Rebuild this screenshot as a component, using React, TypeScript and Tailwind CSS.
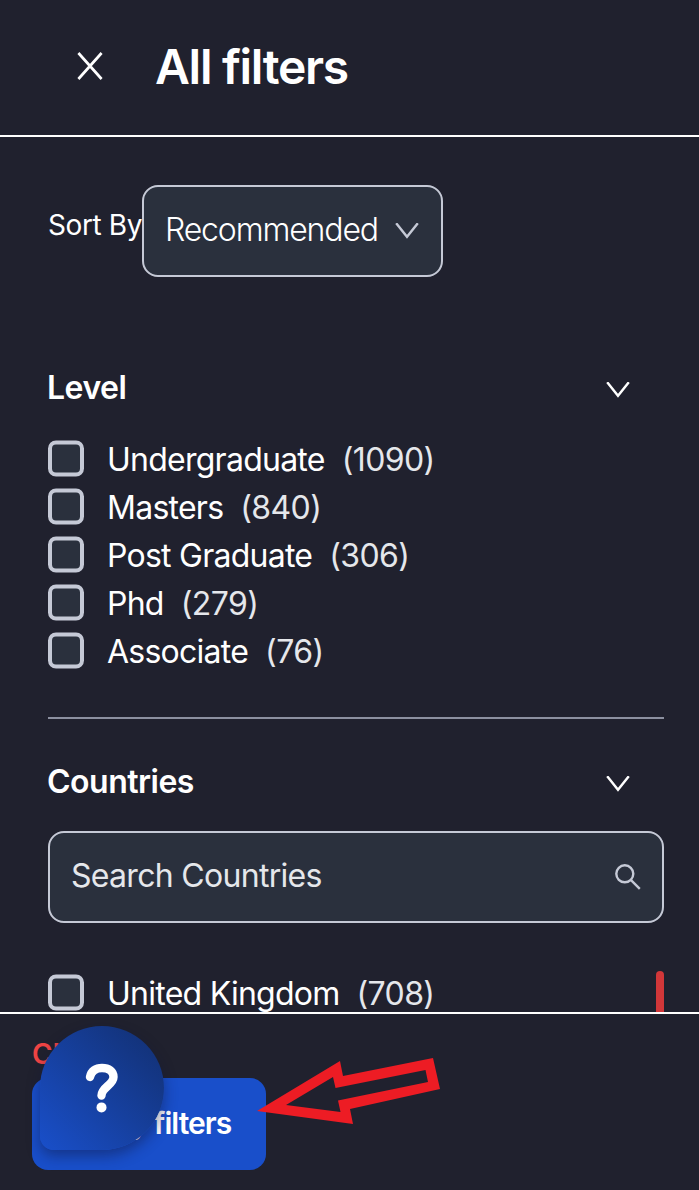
interface FilterOption {
  label: string;
  count: number;
}

const levels: FilterOption[] = [
  { label: 'Undergraduate', count: 1090 },
  { label: 'Masters', count: 840 },
  { label: 'Post Graduate', count: 306 },
  { label: 'Phd', count: 279 },
  { label: 'Associate', count: 76 },
];

const countries: FilterOption[] = [{ label: 'United Kingdom', count: 708 }];

function ChevronDown({ className }: { className?: string }) {
  return (
    <svg viewBox="0 0 24 16" fill="none" stroke="currentColor" strokeWidth="2.4" className={`h-4 w-6 ${className ?? ''}`}>
      <path d="M1.2 0.2 12 13.8 22.8 0.2" />
    </svg>
  );
}

function OptionRow({ label, count }: FilterOption) {
  return (
    <label className="flex h-12 items-start">
      <input
        type="checkbox"
        className="mt-[5px] h-9 w-9 shrink-0 -translate-y-[0.5px] appearance-none rounded-lg border-4 border-[#c5c9d6] bg-[#2a303d]"
      />
      <span className="ml-[23px] text-[32px] leading-[48px] tracking-[-0.75px] whitespace-nowrap">{label}</span>
      <span className="ml-[17px] text-[32px] leading-[48px] tracking-[-0.6px] whitespace-nowrap text-gray-200">({count})</span>
    </label>
  );
}

function SectionTitle({ title }: { title: string }) {
  return (
    <div className="flex h-12 items-center justify-between pr-[34px]">
      <h2 className="-ml-px text-[32px] leading-[48px] font-semibold tracking-[-0.5px]">{title}</h2>
      <ChevronDown className="mt-[3px]" />
    </div>
  );
}

export default function App() {
  return (
    <div className="flex h-[1190px] w-[699px] flex-col overflow-hidden bg-[#20212e] font-['Inter','Liberation_Sans',sans-serif] text-white">
      {/* Header */}
      <header className="flex h-[137px] shrink-0 items-center border-b-2 border-white pl-[77px]">
        <button aria-label="Close">
          <svg viewBox="0 0 26 28" fill="none" stroke="currentColor" strokeWidth="2.7" className="mt-[-3px] h-7 w-[26px]">
            <path d="M1.4 1 24.6 27M24.6 1 1.4 27" />
          </svg>
        </button>
        <h1 className="-mt-0.5 ml-[52px] text-[48px] leading-[72px] font-semibold tracking-[-1.3px]">All filters</h1>
      </header>

      {/* Filters */}
      <main className="min-h-0 flex-1 overflow-hidden pt-12 pr-[35px] pl-12">
        <div className="flex h-[92px]">
          <span className="mt-[19px] w-[94px] text-[28px] leading-[42px] tracking-[-0.4px] whitespace-nowrap">Sort By</span>
          <button className="flex h-[92px] w-[301px] items-start justify-between rounded-2xl border-2 border-[#c5c9d6] bg-[#2a303d] pt-[19px] pr-[22px] pl-[21px]">
            <span className="text-[32px] leading-[48px] font-light tracking-[-1.15px] whitespace-nowrap">Recommended</span>
            <ChevronDown className="mt-[17px] text-[#c5c9d6]" />
          </button>
        </div>

        <section className="mt-[87px] border-b-2 border-[#8c90a0] pb-[41px]">
          <SectionTitle title="Level" />
          <div className="mt-6">
            {levels.map((level) => (
              <OptionRow key={level.label} {...level} />
            ))}
          </div>
        </section>

        <section className="mt-[39px]">
          <SectionTitle title="Countries" />
          <div className="mt-[25px] flex h-[92px] items-center justify-between rounded-2xl border-2 border-[#c5c9d6] bg-[#2a303d] pr-[21px] pl-[21px]">
            <span className="mb-0.5 text-[32px] leading-[48px] tracking-[-0.7px] text-gray-200">Search Countries</span>
            <svg viewBox="0 0 26 26" fill="none" stroke="currentColor" strokeWidth="2.4" className="h-[26px] w-[26px] text-[#c5c9d6]">
              <circle cx="9.8" cy="9.8" r="8.5" />
              <path d="m15.8 15.8 9 9" />
            </svg>
          </div>
          <div className="mt-[47px] flex h-[220px] justify-between">
            <div>
              {countries.map((country) => (
                <OptionRow key={country.label} {...country} />
              ))}
            </div>
            <div className="mt-px h-[120px] w-2 rounded-full bg-[#d13739]" />
          </div>
        </section>
      </main>

      {/* Footer */}
      <footer className="relative h-[178px] shrink-0 border-t-2 border-white pt-5 pl-8">
        <button className="-mt-px block text-[28px] leading-[42px] font-semibold text-[#ef4444]">Clear all</button>
        <button className="mt-[3px] block h-[92px] w-[234px] rounded-2xl bg-[#194fca] pb-0.5 text-[30px] font-semibold tracking-[-0.95px] whitespace-nowrap">
          Apply filters
        </button>

        {/* Help bubble floats over the footer actions */}
        <button
          aria-label="Help"
          className="absolute top-3 left-10 flex h-[124px] w-[124px] items-center justify-center rounded-[62px_62px_62px_14px] bg-linear-to-tr from-[#194fca] to-[#122f70] shadow-[0_6px_14px_rgba(15,23,60,0.45)]"
        >
          <svg viewBox="0 0 34 50" fill="none" className="h-[50px] w-[34px]">
            <path
              d="M5 14C6.2 8 10.8 5 17 5c6.800 0 11.500 3.500 11.500 9 0 8-12 10-12 18.500"
              stroke="white"
              strokeWidth="8.4"
              strokeLinecap="round"
            />
            <circle cx="16.5" cy="44.4" r="5" fill="white" />
          </svg>
        </button>

        {/* Arrow pointing at the apply button */}
        <svg viewBox="0 0 184 68" className="absolute top-[43px] left-[257px] h-[68px] w-[184px]" fill="#ed1c24" fillRule="evenodd">
          <path d="M0 54 83 4 86 19 176 1 183 32 93 52 96 67ZM29 48 83.5 55 81 43.500 171 25 168.500 13 78.500 31 76 20Z" />
        </svg>
      </footer>
    </div>
  );
}
